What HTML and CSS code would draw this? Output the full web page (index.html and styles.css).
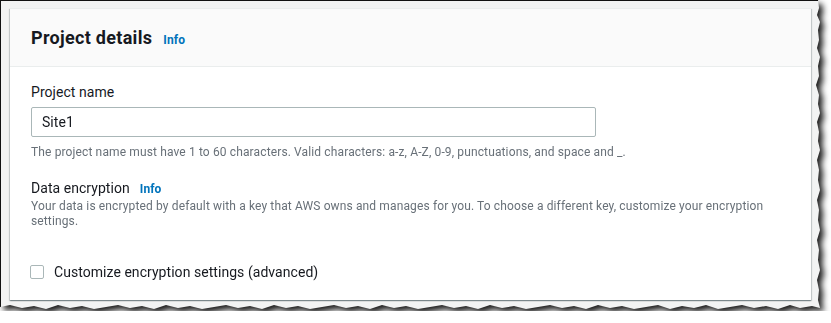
FILE: index.html
```html
<!DOCTYPE html>
<html>
<head>
<meta charset="utf-8">
<link rel="stylesheet" href="styles.css">
</head>
<body>
<div class="shadow">
  <div class="paper">
    <section class="card">
      <header class="card-header">
        <h2 class="title">Project details</h2>
        <a class="info" href="#">Info</a>
      </header>
      <div class="card-body">
        <div class="field">
          <label class="label" for="pname">Project name</label>
          <input class="input" id="pname" type="text" value="Site1">
          <p class="hint">The project name must have 1 to 60 characters. Valid characters: a-z, A-Z, 0-9, punctuations, and space and _.</p>
        </div>
        <div class="field enc">
          <div class="label-row">
            <span class="label">Data encryption</span>
            <a class="info" href="#">Info</a>
          </div>
          <p class="desc">Your data is encrypted by default with a key that AWS owns and manages for you. To choose a different key, customize your encryption settings.</p>
        </div>
        <label class="check">
          <span class="box"></span>
          <span class="check-text">Customize encryption settings (advanced)</span>
        </label>
      </div>
    </section>
  </div>
</div>
</body>
</html>
```
FILE: styles.css
```css
* { box-sizing: border-box; }
html, body { margin: 0; padding: 0; background: #ffffff; }
body { font-family: Roboto, "Noto Sans", Arial, sans-serif; color: #16191f; }

.shadow {
  width: 822px;
  height: 311px;
  filter: drop-shadow(4px 4px 3px rgba(0,0,0,0.9));
}
.paper {
  width: 822px;
  height: 311px;
  background: #f2f3f3;
  border-top: 1px solid #111;
  border-left: 1px solid #111;
  padding: 7px 0 0 9px;
  clip-path: polygon(0 0, 818px 0, 819px 8px, 817px 15px, 820px 22px, 818px 30px, 819px 40px, 817px 48px, 820px 57px, 818px 66px, 819px 76px, 816px 85px, 819px 95px, 818px 104px, 820px 113px, 817px 122px, 819px 132px, 818px 141px, 820px 150px, 817px 160px, 819px 170px, 818px 180px, 820px 190px, 817px 200px, 819px 210px, 818px 220px, 820px 230px, 817px 240px, 819px 250px, 818px 260px, 820px 270px, 817px 280px, 819px 290px, 818px 300px, 820px 308px,
    812px 306px, 800px 308px, 790px 305px, 778px 309px, 766px 306px, 754px 308px, 742px 305px, 730px 307px, 718px 309px, 706px 305px, 694px 308px, 682px 306px, 670px 309px, 658px 305px, 646px 307px, 634px 309px, 622px 306px, 610px 308px, 598px 305px, 586px 309px, 574px 306px, 562px 308px, 550px 305px, 538px 307px, 526px 309px, 514px 306px, 502px 308px, 490px 305px, 478px 309px, 466px 306px, 454px 308px, 442px 305px, 430px 307px, 418px 309px, 406px 306px, 394px 308px, 382px 305px, 370px 309px, 358px 306px, 346px 308px, 334px 305px, 322px 307px, 310px 309px, 298px 306px, 286px 308px, 274px 305px, 262px 309px, 250px 306px, 238px 308px, 226px 305px, 214px 307px, 202px 309px, 190px 306px, 178px 308px, 166px 305px, 154px 309px, 142px 306px, 130px 308px, 118px 305px, 106px 307px, 94px 309px, 82px 306px, 70px 308px, 58px 305px, 46px 309px, 34px 306px, 22px 308px, 10px 305px, 0 307px);
}

.card {
  width: 801px;
  background: #ffffff;
  border-top: 1px solid #eaeded;
  box-shadow: 0 1px 1px 0 rgba(0,28,36,0.3), 1px 1px 1px 0 rgba(0,28,36,0.15), -1px 1px 1px 0 rgba(0,28,36,0.15);
}
.card-header {
  display: flex;
  align-items: baseline;
  gap: 11px;
  background: #fafafa;
  border-bottom: 1px solid #eaeded;
  padding: 18px 21px 17px;
}
.title {
  margin: 0;
  font-size: 18px;
  line-height: 22px;
  font-weight: 700;
  letter-spacing: 0.3px;
  color: #16191f;
}
.info {
  font-size: 12px;
  font-weight: 700;
  letter-spacing: 0.1px;
  color: #0073bb;
  text-decoration: none;
}

.card-body {
  padding: 14px 21px 17px;
}
.field { display: flex; flex-direction: column; }
.label {
  font-size: 14px;
  line-height: 22px;
  letter-spacing: 0.05px;
  color: #16191f;
}
.input {
  margin-top: 4px;
  width: 565px;
  height: 30px;
  border: 1px solid #aab7b8;
  border-radius: 2px;
  padding: 0 10px;
  font-family: inherit;
  font-size: 14px;
  letter-spacing: 0.05px;
  color: #16191f;
  background: #fff;
  outline: none;
}
.hint {
  margin: 7px 0 0;
  font-size: 12px;
  line-height: 16px;
  letter-spacing: 0.13px;
  color: #687078;
}
.enc { margin-top: 17px; }
.label-row {
  display: flex;
  align-items: baseline;
  gap: 10px;
}
.desc {
  margin: 0;
  font-size: 12px;
  line-height: 15px;
  letter-spacing: 0.13px;
  color: #687078;
}
.check {
  margin-top: 32px;
  display: flex;
  align-items: center;
  gap: 10px;
  height: 22px;
}
.box {
  width: 14px;
  height: 14px;
  border: 1px solid #aab7b8;
  border-radius: 2px;
  background: #fff;
  margin-left: -1px;
}
.check-text {
  font-size: 14px;
  line-height: 22px;
  letter-spacing: 0.05px;
  color: #16191f;
}
```
